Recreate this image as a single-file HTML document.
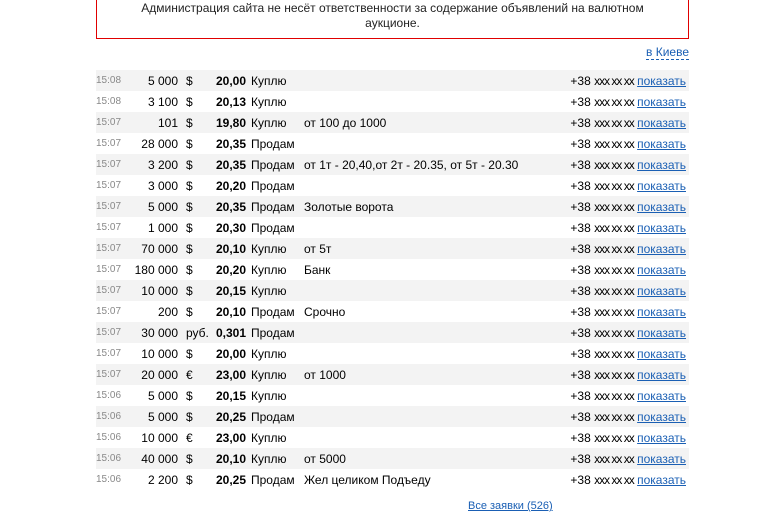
<!DOCTYPE html>
<html><head><meta charset="utf-8"><style>
body{margin:0;width:780px;height:516px;overflow:hidden;background:#fff;font-family:"Liberation Sans",Arial,sans-serif;font-size:12px;color:#000;position:relative}
.box{position:absolute;left:96px;top:-10px;width:591px;height:37px;border:1px solid #e00000;text-align:center;font-size:12px;line-height:15px;padding-top:10px;box-sizing:content-box;color:#222}
.kiev{position:absolute;right:91px;top:45px;color:#1a5fb4;border-bottom:1px dashed #1a5fb4;line-height:14px}
table{position:absolute;left:96px;top:70px;width:593px;border-collapse:collapse}
td{height:21px;padding:0;white-space:nowrap;vertical-align:middle}
tr:nth-child(odd){background:#f3f3f3}
.t{color:#888;font-size:10px;width:28px;vertical-align:top;padding-top:5px;height:16px}
.a{text-align:right;width:54px}
.c{width:28px;padding-left:8px}
.r{text-align:right;width:32px;font-weight:bold}
.k{width:53px;padding-left:5px}
.p{text-align:right;padding-right:3px}
a{color:#1a5fb4;text-decoration:underline}
.x{font-size:12px;letter-spacing:-1px}
.all{position:absolute;left:468px;top:500px;font-size:11px;color:#1a5fb4;text-decoration:underline}
</style></head><body>
<div class="box">Администрация сайта не несёт ответственности за содержание объявлений на валютном<br>аукционе.</div>
<span class="kiev">в Киеве</span>
<table>
<tr><td class="t">15:08</td><td class="a">5 000</td><td class="c">$</td><td class="r">20,00</td><td class="k">Куплю</td><td></td><td class="p">+38 <span class="x">xxx xx xx</span> <a>показать</a></td></tr>
<tr><td class="t">15:08</td><td class="a">3 100</td><td class="c">$</td><td class="r">20,13</td><td class="k">Куплю</td><td></td><td class="p">+38 <span class="x">xxx xx xx</span> <a>показать</a></td></tr>
<tr><td class="t">15:07</td><td class="a">101</td><td class="c">$</td><td class="r">19,80</td><td class="k">Куплю</td><td>от 100 до 1000</td><td class="p">+38 <span class="x">xxx xx xx</span> <a>показать</a></td></tr>
<tr><td class="t">15:07</td><td class="a">28 000</td><td class="c">$</td><td class="r">20,35</td><td class="k">Продам</td><td></td><td class="p">+38 <span class="x">xxx xx xx</span> <a>показать</a></td></tr>
<tr><td class="t">15:07</td><td class="a">3 200</td><td class="c">$</td><td class="r">20,35</td><td class="k">Продам</td><td>от 1т - 20,40,от 2т - 20.35, от 5т - 20.30</td><td class="p">+38 <span class="x">xxx xx xx</span> <a>показать</a></td></tr>
<tr><td class="t">15:07</td><td class="a">3 000</td><td class="c">$</td><td class="r">20,20</td><td class="k">Продам</td><td></td><td class="p">+38 <span class="x">xxx xx xx</span> <a>показать</a></td></tr>
<tr><td class="t">15:07</td><td class="a">5 000</td><td class="c">$</td><td class="r">20,35</td><td class="k">Продам</td><td>Золотые ворота</td><td class="p">+38 <span class="x">xxx xx xx</span> <a>показать</a></td></tr>
<tr><td class="t">15:07</td><td class="a">1 000</td><td class="c">$</td><td class="r">20,30</td><td class="k">Продам</td><td></td><td class="p">+38 <span class="x">xxx xx xx</span> <a>показать</a></td></tr>
<tr><td class="t">15:07</td><td class="a">70 000</td><td class="c">$</td><td class="r">20,10</td><td class="k">Куплю</td><td>от 5т</td><td class="p">+38 <span class="x">xxx xx xx</span> <a>показать</a></td></tr>
<tr><td class="t">15:07</td><td class="a">180 000</td><td class="c">$</td><td class="r">20,20</td><td class="k">Куплю</td><td>Банк</td><td class="p">+38 <span class="x">xxx xx xx</span> <a>показать</a></td></tr>
<tr><td class="t">15:07</td><td class="a">10 000</td><td class="c">$</td><td class="r">20,15</td><td class="k">Куплю</td><td></td><td class="p">+38 <span class="x">xxx xx xx</span> <a>показать</a></td></tr>
<tr><td class="t">15:07</td><td class="a">200</td><td class="c">$</td><td class="r">20,10</td><td class="k">Продам</td><td>Срочно</td><td class="p">+38 <span class="x">xxx xx xx</span> <a>показать</a></td></tr>
<tr><td class="t">15:07</td><td class="a">30 000</td><td class="c">руб.</td><td class="r">0,301</td><td class="k">Продам</td><td></td><td class="p">+38 <span class="x">xxx xx xx</span> <a>показать</a></td></tr>
<tr><td class="t">15:07</td><td class="a">10 000</td><td class="c">$</td><td class="r">20,00</td><td class="k">Куплю</td><td></td><td class="p">+38 <span class="x">xxx xx xx</span> <a>показать</a></td></tr>
<tr><td class="t">15:07</td><td class="a">20 000</td><td class="c">€</td><td class="r">23,00</td><td class="k">Куплю</td><td>от 1000</td><td class="p">+38 <span class="x">xxx xx xx</span> <a>показать</a></td></tr>
<tr><td class="t">15:06</td><td class="a">5 000</td><td class="c">$</td><td class="r">20,15</td><td class="k">Куплю</td><td></td><td class="p">+38 <span class="x">xxx xx xx</span> <a>показать</a></td></tr>
<tr><td class="t">15:06</td><td class="a">5 000</td><td class="c">$</td><td class="r">20,25</td><td class="k">Продам</td><td></td><td class="p">+38 <span class="x">xxx xx xx</span> <a>показать</a></td></tr>
<tr><td class="t">15:06</td><td class="a">10 000</td><td class="c">€</td><td class="r">23,00</td><td class="k">Куплю</td><td></td><td class="p">+38 <span class="x">xxx xx xx</span> <a>показать</a></td></tr>
<tr><td class="t">15:06</td><td class="a">40 000</td><td class="c">$</td><td class="r">20,10</td><td class="k">Куплю</td><td>от 5000</td><td class="p">+38 <span class="x">xxx xx xx</span> <a>показать</a></td></tr>
<tr><td class="t">15:06</td><td class="a">2 200</td><td class="c">$</td><td class="r">20,25</td><td class="k">Продам</td><td>Жел целиком Подъеду</td><td class="p">+38 <span class="x">xxx xx xx</span> <a>показать</a></td></tr>
</table>
<span class="all">Все заявки (526)</span>
</body></html>
